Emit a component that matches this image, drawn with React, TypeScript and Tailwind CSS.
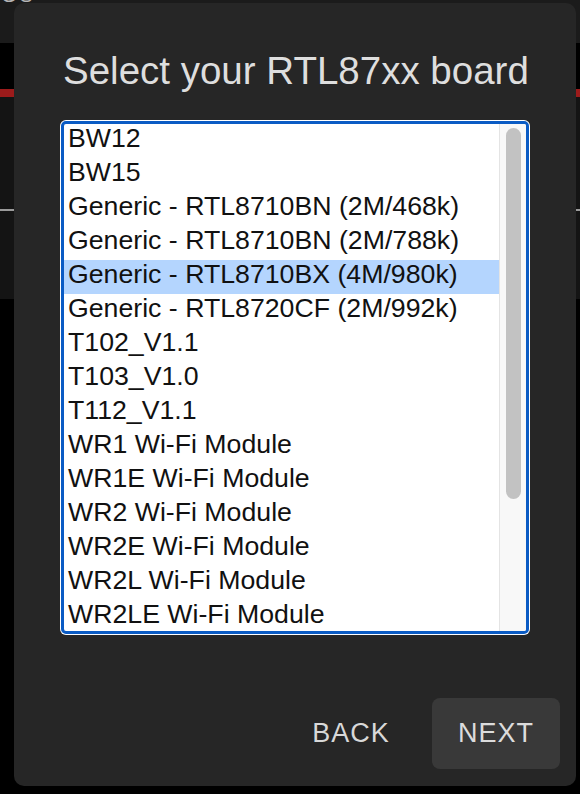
import React from "react";

const boards = [
  "BW12",
  "BW15",
  "Generic - RTL8710BN (2M/468k)",
  "Generic - RTL8710BN (2M/788k)",
  "Generic - RTL8710BX (4M/980k)",
  "Generic - RTL8720CF (2M/992k)",
  "T102_V1.1",
  "T103_V1.0",
  "T112_V1.1",
  "WR1 Wi-Fi Module",
  "WR1E Wi-Fi Module",
  "WR2 Wi-Fi Module",
  "WR2E Wi-Fi Module",
  "WR2L Wi-Fi Module",
  "WR2LE Wi-Fi Module",
];

const selected = "Generic - RTL8710BX (4M/980k)";

export default function App() {
  return (
    <div className="relative h-[794px] w-[580px] overflow-hidden bg-black font-['Liberation_Sans',Arial,sans-serif]">
      {/* Page behind the modal */}
      <div className="h-[43px] overflow-hidden bg-[#1b1b1b]">
        <span className="-mt-[15px] block pl-[1px] text-[20px] leading-[20px] tracking-[3px] text-[#b5b5b5]">
          GS
        </span>
      </div>
      <div className="h-[46px] bg-black" />
      <div className="h-[8px] bg-[#9c1b1b]" />
      <div className="h-[112px] bg-[#141414]" />
      <div className="h-[2px] bg-[#9a9a9a]" />
      <div className="h-[88px] bg-[#141414]" />

      {/* Dialog */}
      <div className="absolute left-[14px] top-[3px] flex h-[783px] w-[562px] flex-col rounded-[10px] bg-[#262626] px-[46px]">
        <h1 className="mt-[49px] pl-[3px] text-[38.5px] leading-[38px] text-[#dedede]">
          Select your RTL87xx board
        </h1>

        <div className="mt-[30px] h-[515px] rounded-[6px] bg-white p-[1px]">
          <div className="flex h-full overflow-hidden rounded-[5px] border-[3px] border-[#0a5bc4]">
            <ul className="flex-1 overflow-hidden">
              {boards.map((b) => (
                <li
                  key={b}
                  className={`h-[34px] whitespace-nowrap pl-[4px] text-[26.7px] leading-[28px] text-[#111] ${
                    b === selected ? "bg-[#b4d5fe]" : ""
                  }`}
                >
                  {b}
                </li>
              ))}
            </ul>
            <div className="w-[27px] border-l border-[#e4e4e4] bg-[#f8f8f8] pl-[6px] pt-[4px]">
              <div className="h-[371px] w-[15px] rounded-full bg-[#c2c2c2]" />
            </div>
          </div>
        </div>

        <div className="mt-auto mb-[17px] -mr-[30px] flex justify-end gap-[17px]">
          <button className="h-[71px] w-[128px] rounded-[8px] text-[27px] tracking-[1px] text-[#d8d8d8]">
            BACK
          </button>
          <button className="h-[71px] w-[128px] rounded-[8px] bg-[#393939] text-[27px] tracking-[1px] text-[#dcdcdc]">
            NEXT
          </button>
        </div>
      </div>
    </div>
  );
}
